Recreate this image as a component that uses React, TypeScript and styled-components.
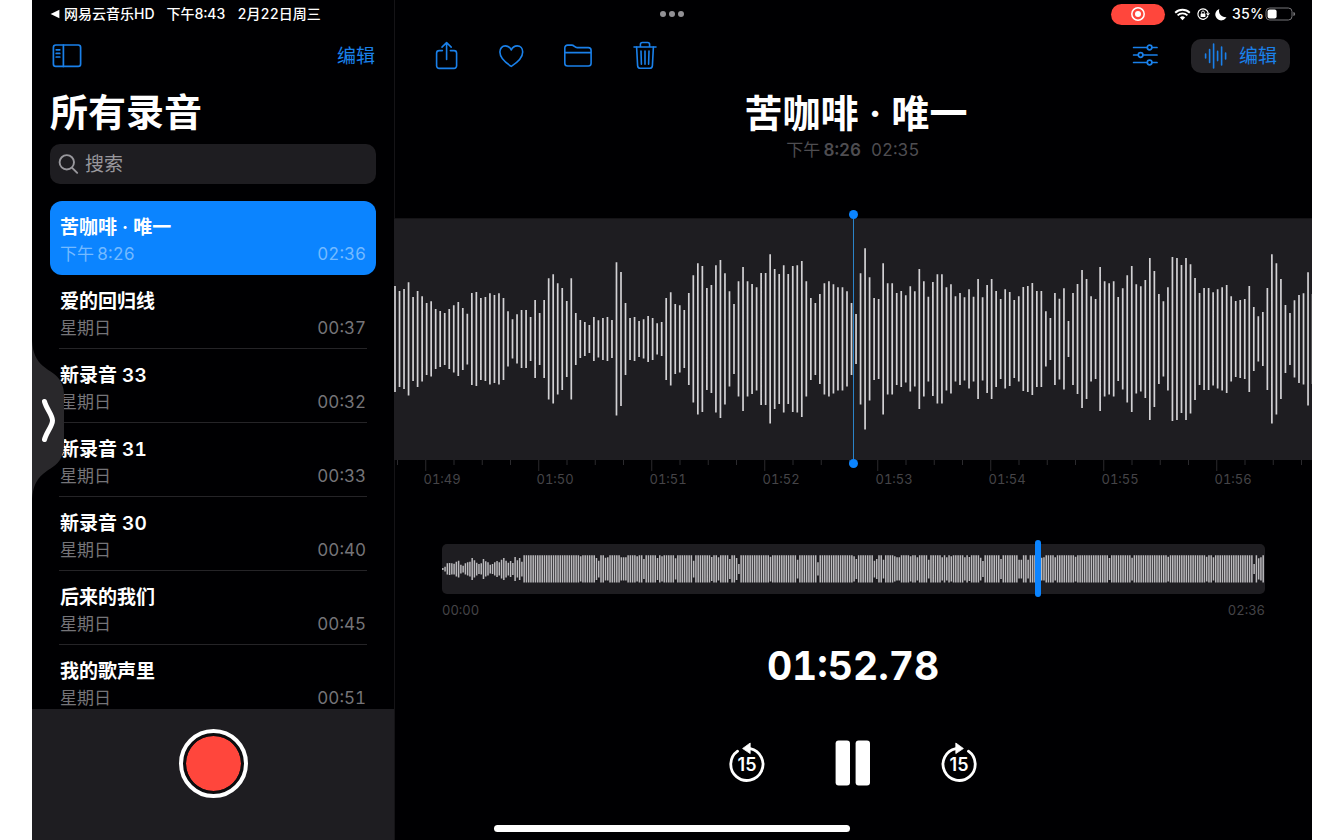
import React from "react";
import styled, { createGlobalStyle, css } from "styled-components";

const color = {
  bg: "#000002",
  panel: "#1e1d21",
  raised: "#252428",
  blue: "#0b84ff",
  icon: "#1a80ea",
  red: "#ff463c",
  muted: "#757478",
  faint: "#4e4d51",
  axis: "#454448",
  bar: "#d2d1d4",
};

const GlobalStyle = createGlobalStyle`
  *, *::before, *::after { box-sizing: border-box; }
  body {
    margin: 0;
    background: #fff;
    color: #fff;
    font-family: Inter, "Noto Sans CJK SC", sans-serif;
    font-variant-numeric: tabular-nums;
  }
  button, input { font: inherit; color: inherit; }
  h1, h2, p, ul { margin: 0; padding: 0; font-weight: inherit; }
`;

const Screen = styled.div`
  position: relative;
  display: grid;
  grid-template-columns: 362px minmax(0, 1fr);
  height: 100vh;
  min-height: 700px;
  margin: 0 32px;
  background: ${color.bg};
  overflow: hidden;
`;

const Sidebar = styled.aside`
  display: flex;
  flex-direction: column;
  min-height: 0;
  box-shadow: 1px 0 #151417;
`;

const Main = styled.main`
  display: flex;
  flex-direction: column;
  min-width: 0;
`;

const StatusBar = styled.div<{ $end?: boolean }>`
  flex: none;
  display: flex;
  align-items: center;
  justify-content: ${(p) => (p.$end ? "flex-end" : "flex-start")};
  gap: ${(p) => (p.$end ? "5px" : "12px")};
  height: 28px;
  padding: ${(p) => (p.$end ? "0 16px" : "0 18px")};
  font-size: 14px;
  font-weight: 500;
  line-height: 20px;
  white-space: nowrap;
`;

const BackLink = styled.a`
  display: flex;
  align-items: center;
  gap: 4px;
  color: inherit;
  text-decoration: none;
`;

const RecordingPill = styled.span`
  display: grid;
  place-items: center;
  width: 54px;
  height: 21px;
  margin-right: 4px;
  border-radius: 11px;
  background: ${color.red};
`;

const Dots = styled.button`
  position: absolute;
  top: 10px;
  left: 50%;
  transform: translateX(-50%);
  display: flex;
  gap: 3px;
  padding: 1px;
  border: 0;
  background: none;
  span {
    width: 6px;
    height: 6px;
    border-radius: 50%;
    background: #929195;
  }
`;

const Toolbar = styled.div<{ $main?: boolean }>`
  flex: none;
  display: flex;
  align-items: center;
  justify-content: space-between;
  height: 56px;
  padding: ${(p) => (p.$main ? "0 22px 0 38px" : "0 19px 0 18px")};
`;

const ToolGroup = styled.div<{ $gap: number }>`
  display: flex;
  align-items: center;
  gap: ${(p) => p.$gap}px;
`;

const IconButton = styled.button`
  display: grid;
  place-items: center;
  padding: 0;
  border: 0;
  background: none;
  color: ${color.icon};
  svg { display: block; }
`;

const TextButton = styled.button`
  padding: 2px 0 0;
  border: 0;
  background: none;
  color: ${color.icon};
  font-size: 19px;
  line-height: 28px;
`;

const EditButton = styled(TextButton)`
  display: flex;
  align-items: center;
  gap: 12px;
  height: 34px;
  padding: 0 13px;
  border-radius: 10px;
  background: ${color.raised};
  span { padding-top: 2px; }
`;

const LibraryTitle = styled.h1`
  padding: 0 18px;
  font-size: 38px;
  font-weight: 700;
  line-height: 56px;
`;

const SearchBox = styled.label`
  flex: none;
  display: flex;
  align-items: center;
  gap: 6px;
  height: 40px;
  margin: 4px 18px 0;
  padding: 0 8px;
  border-radius: 10px;
  background: ${color.panel};
  color: #98979c;
  input {
    flex: 1;
    min-width: 0;
    padding: 2px 0 0;
    border: 0;
    outline: 0;
    background: none;
    font-size: 19px;
    line-height: 28px;
  }
  input::placeholder { color: #98979c; opacity: 1; }
`;

const RecordingList = styled.ul`
  flex: 1;
  min-height: 0;
  margin-top: 17px;
  padding: 0 18px;
  list-style: none;
  overflow-y: auto;
  scrollbar-width: none;
`;

const RecordingRow = styled.button<{ $selected?: boolean }>`
  position: relative;
  display: grid;
  grid-template-columns: 1fr auto;
  width: 100%;
  height: 74px;
  padding: 13px 10px 9px;
  border: 0;
  border-radius: 12px;
  background: none;
  color: ${color.muted};
  font-size: 17px;
  line-height: 24px;
  text-align: left;
  strong {
    grid-column: 1 / -1;
    color: #fff;
    font-size: 19px;
    font-weight: 600;
    line-height: 28px;
  }
  ${(p) =>
    p.$selected
      ? css`
          background: ${color.blue};
          color: #74baff;
        `
      : css`
          &::after {
            content: "";
            position: absolute;
            right: 9px;
            bottom: 0;
            left: 9px;
            height: 1px;
            background: #252427;
          }
        `}
`;

const RecordPanel = styled.div`
  flex: none;
  display: flex;
  justify-content: center;
  height: 131px;
  padding-top: 20px;
  background: ${color.panel};
`;

const RecordButton = styled.button`
  width: 69px;
  height: 69px;
  padding: 3px;
  border: 4px solid #fff;
  border-radius: 50%;
  background: ${color.red} content-box;
  box-shadow: inset 0 0 0 3px #0c0c0e;
`;

const Drawer = styled.button`
  position: absolute;
  top: 50%;
  left: 0;
  transform: translateY(-50%);
  padding: 0;
  border: 0;
  background: none;
  svg { display: block; }
`;

const Heading = styled.header`
  display: flex;
  flex-direction: column;
  align-items: center;
  margin-top: 4px;
  h2 {
    padding-left: 6px;
    font-size: 38px;
    font-weight: 700;
    line-height: 50px;
  }
  p {
    display: flex;
    gap: 10px;
    color: ${color.faint};
    font-size: 17px;
    line-height: 24px;
  }
  b { font-weight: 600; }
`;

const Wave = styled.section`
  position: relative;
  flex: none;
  margin-top: 56px;
  border-top: 1px solid #151417;
`;

const WaveArea = styled.svg`
  display: block;
  width: 100%;
  height: 252px;
`;

const AxisLabels = styled.div`
  display: flex;
  justify-content: center;
  overflow: hidden;
  color: ${color.axis};
  font-size: 13px;
  line-height: 16px;
  span {
    flex: none;
    width: 113px;
  }
  span:first-child { margin-left: 45px; }
`;

const Playhead = styled.div`
  position: absolute;
  top: -5px;
  left: 50%;
  width: 1px;
  height: 250px;
  background: #2b83c8;
  &::before,
  &::after {
    content: "";
    position: absolute;
    left: -4px;
    width: 9px;
    height: 9px;
    border-radius: 50%;
    background: ${color.blue};
  }
  &::before { top: -4px; }
  &::after { bottom: -4px; }
`;

const Overview = styled.section`
  flex: none;
  margin: 57px 47px 0 48px;
`;

const Track = styled.div`
  position: relative;
  height: 50px;
  border-radius: 5px;
  background: ${color.panel};
  svg {
    display: block;
    width: 100%;
    height: 50px;
  }
`;

const Scrubber = styled.input`
  position: absolute;
  top: -4px;
  left: -3px;
  width: calc(100% + 6px);
  height: 57px;
  margin: 0;
  background: none;
  appearance: none;
  &::-webkit-slider-thumb {
    appearance: none;
    width: 6px;
    height: 57px;
    border-radius: 3px;
    background: ${color.blue};
  }
`;

const Range = styled.div`
  display: flex;
  justify-content: space-between;
  margin-top: 8px;
  color: ${color.axis};
  font-size: 13px;
  line-height: 16px;
`;

const Clock = styled.div`
  margin-top: 24px;
  font-size: 39px;
  font-weight: 700;
  line-height: 48px;
  text-align: center;
`;

const Transport = styled.div`
  display: flex;
  align-items: center;
  justify-content: center;
  gap: 68px;
  margin-top: 50px;
  button { color: #fff; }
`;

const HomeIndicator = styled.div`
  position: absolute;
  bottom: 8px;
  left: 50%;
  transform: translateX(-50%);
  width: 356px;
  height: 7px;
  border-radius: 4px;
  background: #fff;
`;

const recordings = [
  { name: "苦咖啡 · 唯一", date: "下午\u20098:26", length: "02:36" },
  { name: "爱的回归线", date: "星期日", length: "00:37" },
  { name: "新录音 33", date: "星期日", length: "00:32" },
  { name: "新录音 31", date: "星期日", length: "00:33" },
  { name: "新录音 30", date: "星期日", length: "00:40" },
  { name: "后来的我们", date: "星期日", length: "00:45" },
  { name: "我的歌声里", date: "星期日", length: "00:51" },
];

// Peak of each detail sample, as thirds of a pixel below the highest level (417).
const peaks = [
  258, 273, 267, 247, 291, 273, 289, 309, 304, 327, 333, 339, 327, 316, 306, 324, 341, 279, 276, 294,
  291, 280, 285, 280, 294, 334, 358, 343, 330, 330, 351, 300, 339, 300, 235, 223, 250, 264, 303, 235,
  339, 360, 366, 375, 351, 361, 354, 351, 360, 187, 216, 309, 354, 351, 363, 358, 348, 354, 370, 366,
  294, 277, 312, 316, 330, 279, 226, 190, 198, 264, 255, 196, 180, 220, 274, 312, 244, 201, 244, 252,
  262, 219, 219, 163, 207, 222, 196, 222, 198, 196, 183, 244, 294, 309, 282, 250, 244, 253, 262, 262,
  274, 309, 342, 220, 145, 232, 294, 297, 190, 250, 250, 279, 273, 286, 259, 274, 207, 244, 290, 246,
  223, 223, 262, 253, 289, 279, 292, 268, 290, 237, 292, 255, 237, 273, 297, 268, 276, 300, 289, 261,
  258, 249, 273, 273, 334, 354, 279, 296, 265, 363, 279, 252, 210, 237, 289, 297, 201, 244, 250, 244,
  291, 265, 226, 198, 253, 259, 240, 174, 213, 282, 304, 262, 171, 174, 195, 174, 193, 234, 279, 264,
  264, 277, 268, 262, 255, 289, 303, 300, 297, 258, 321, 349, 336, 264, 163, 190, 237, 315, 339, 301,
  285, 280, 217, 282,
];

// Quiet opening of the recording, then the samples that fall below full level.
const intro = [
  3, 7, 17, 18, 17, 16, 22, 25, 13, 10, 17, 20, 22, 33, 26, 19, 15, 17, 30, 23, 20, 13, 15, 20, 24, 20,
  28, 33, 25, 19, 24, 18, 36, 26, 33, 22,
];
const dips: Record<number, number> = {
  61: 38, 68: 33, 69: 25, 72: 34, 73: 35, 79: 35, 80: 35, 81: 35, 86: 38, 89: 30, 95: 33, 97: 38,
  103: 32, 111: 25, 119: 36, 122: 35, 127: 30, 130: 33, 131: 15, 145: 37, 157: 28, 166: 20, 182: 38,
  183: 30, 191: 25, 192: 30, 195: 28, 200: 38, 201: 35, 202: 35, 207: 38, 210: 35, 215: 28, 221: 35,
  223: 35, 225: 38, 231: 35, 233: 36, 238: 34, 239: 24, 247: 30, 255: 28, 256: 28, 259: 28, 265: 34,
  266: 35, 271: 35, 280: 37, 295: 33, 305: 34, 321: 37, 338: 37, 341: 35, 359: 15, 361: 32, 362: 35,
};
const SAMPLES = 364;

const wavePath = peaks
  .map((v, i) => {
    const half = (417 - v) / 3;
    return `M${(1 + i * 4.52).toFixed(2)} ${(120 - half).toFixed(1)}v${(half * 2).toFixed(1)}`;
  })
  .join("");

const overviewPath = Array.from({ length: SAMPLES }, (_, i) => {
  const half = (intro[i] ?? dips[i] ?? 41) / 3;
  return `M${(0.8 + i * 2.26).toFixed(2)} ${(25 - half).toFixed(1)}v${(half * 2).toFixed(1)}`;
}).join("");

const ticks = Array.from({ length: 33 }, (_, i) => ({ x: 3.5 + i * 28.25, major: i % 4 === 1 }));

const stroke = { fill: "none", stroke: "currentColor", strokeLinecap: "round", strokeLinejoin: "round" } as const;

const SidebarIcon = () => (
  <svg width="32" height="28" viewBox="0 0 32 28" {...stroke} strokeWidth="1.7">
    <rect x="3.4" y="3" width="27.2" height="21.4" rx="2.4" />
    <path d="M13.4 3v21.4M6.2 7.8h3.6M6.2 11.4h3.6M6.2 15h3.6" />
  </svg>
);

const SearchIcon = () => (
  <svg width="21" height="22" viewBox="0 0 21 22" {...stroke} strokeWidth="1.9">
    <circle cx="8.8" cy="9.3" r="7.2" />
    <path d="m14.2 14.8 5 5" />
  </svg>
);

const ShareIcon = () => (
  <svg width="28" height="32" viewBox="0 1 28 32" {...stroke} strokeWidth="1.6">
    <path d="M10.4 11.6H7.2a2.6 2.6 0 0 0-2.6 2.6v12.6a2.600 2.600 0 0 0 2.600 2.600h14.800a2.600 2.600 0 0 0 2.600-2.600V14.200a2.600 2.600 0 0 0-2.600-2.600h-3.600" />
    <path d="M14.600 20.400V4M10 8.100l4.600-4.500 4.600 4.500" />
  </svg>
);

const HeartIcon = () => (
  <svg width="28" height="28" viewBox="0 0 28 28" {...stroke} strokeWidth="1.6">
    <path d="M14.3 24.4C8.4 20.7 2.9 15.7 2.9 10.1c0-3.600 2.300-6.200 5.500-6.200 2.700 0 4.800 1.500 5.900 4.100 1.100-2.600 3.200-4.100 5.900-4.100 3.200 0 5.500 2.600 5.500 6.200 0 5.600-5.500 10.600-11.400 14.300Z" />
  </svg>
);

const FolderIcon = () => (
  <svg width="32" height="28" viewBox="0 0 32 28" {...stroke} strokeWidth="1.6">
    <path d="M2.800 9.800V5.900a2.800 2.800 0 0 1 2.800-2.800h4.100c1.400 0 1.900.5 2.800 1.300.8.8 1.400 1.200 2.700 1.200h11.100a2.800 2.800 0 0 1 2.800 2.800v12.800a2.800 2.800 0 0 1-2.800 2.800H5.600a2.800 2.800 0 0 1-2.800-2.800ZM2.800 10.600h26.300" />
  </svg>
);

const TrashIcon = () => (
  <svg width="28" height="32" viewBox="0 1 28 32" {...stroke} strokeWidth="1.6">
    <path d="M3 8h22M9.400 7.800V5.500c0-1.300.8-2 2-2h5.200c1.200 0 2 .7 2 2v2.300" />
    <path d="m5.600 8 1 18.600c.1 1.700 1.100 2.700 2.700 2.700h9.400c1.600 0 2.600-1 2.700-2.700l1-18.600M10 12l.4 13.200M14 12v13.200M18 12l-.4 13.200" />
  </svg>
);

const SlidersIcon = () => (
  <svg width="26" height="24" viewBox="0 1 26 24" {...stroke} strokeWidth="1.7">
    <path d="M1.600 4.500h13.600M20 4.500h5M1.600 12h4.600M11 12h14M1.600 19.500h13.600M20 19.500h5" />
    <circle cx="17.600" cy="4.500" r="2.300" />
    <circle cx="8.600" cy="12" r="2.300" />
    <circle cx="17.600" cy="19.500" r="2.300" />
  </svg>
);

const WaveformIcon = () => (
  <svg width="23" height="28" viewBox="0 0 23 28" {...stroke} strokeWidth="1.6">
    <path d="M1.600 12v4M5.600 7.600v12.800M9.600 2v24M13.600 9.400v9.200M17.600 5v18M21.600 11v6" />
  </svg>
);

const RecordingDot = () => (
  <svg width="16" height="16" viewBox="0 0 16 16">
    <circle cx="8" cy="8" r="6.2" fill="none" stroke="#fff" strokeWidth="1.5" />
    <circle cx="8" cy="8" r="3" fill="#fff" />
  </svg>
);

const WifiIcon = () => (
  <svg width="17" height="13" viewBox="0 0 17 13" fill="#fff">
    <path d="M8.5 12.3 5.9 9.5a3.800 3.800 0 0 1 5.200 0Z" />
    <path d="M1.200 4.700a10.500 10.500 0 0 1 14.600 0M3.600 7.400a7 7 0 0 1 9.800 0" fill="none" stroke="#fff" strokeWidth="1.9" />
  </svg>
);

const RotationLockIcon = () => (
  <svg width="14" height="14" viewBox="0 0 14 14">
    <path d="M11.9 9.1a5.2 5.2 0 1 1 .3-3" fill="none" stroke="#fff" strokeWidth="1.2" />
    <path d="m10 6.2 4 .1-2.1 2.6Z" fill="#fff" />
    <rect x="4.6" y="6.4" width="4.8" height="3.6" rx=".6" fill="#fff" />
    <path d="M5.6 6.6V5.4a1.400 1.400 0 0 1 2.800 0v1.200" fill="none" stroke="#fff" strokeWidth=".9" />
  </svg>
);

const MoonIcon = () => (
  <svg width="12" height="13" viewBox="0 0 12 13" fill="#fff">
    <path d="M4.3.9a6.400 6.400 0 0 0 7.200 8.200A5.900 5.900 0 1 1 4.300.9Z" />
  </svg>
);

const BatteryIcon = () => (
  <svg width="31" height="14" viewBox="0 0 31 14">
    <rect x="1" y="1" width="26" height="12" rx="3.6" fill="none" stroke="#77767a" />
    <rect x="2.6" y="2.6" width="9" height="8.8" rx="2" fill="#fff" />
    <path d="M28.4 5v4c1.200-.4 1.700-1.100 1.700-2s-.5-1.600-1.700-2Z" fill="#77767a" />
  </svg>
);

const SkipIcon = ({ forward }: { forward?: boolean }) => (
  <svg width="40" height="44" viewBox="0 0 40 44" fill="none">
    <g transform={forward ? "matrix(-1 0 0 1 40 0)" : undefined}>
      <path d="M10.600 10.200a16.100 16.100 0 1 0 12.600-2.600" stroke="#fff" strokeWidth="2.800" strokeLinecap="round" />
      <path d="M15.600 7.500 23.200 2v10.600Z" fill="#fff" stroke="#fff" strokeWidth=".8" strokeLinejoin="round" />
    </g>
    <text x="20" y="30" textAnchor="middle" fill="#fff" fontSize="18" fontWeight="600" style={{ fontVariantNumeric: "normal" }}>
      15
    </text>
  </svg>
);

const PauseIcon = () => (
  <svg width="36" height="46" viewBox="0 0 36 46" fill="#fff">
    <rect x=".6" y=".6" width="14.4" height="45" rx="3" />
    <rect x="20.6" y=".6" width="14.4" height="45" rx="3" />
  </svg>
);

export default function App() {
  return (
    <>
      <GlobalStyle />
      <Screen>
        <Sidebar>
          <StatusBar>
            <BackLink href="#">
              <svg width="10" height="10" viewBox="0 0 10 10" fill="#fff">
                <path d="M.6 5 9.4.8v8.400Z" />
              </svg>
              网易云音乐HD
            </BackLink>
            <span>下午8:43</span>
            <span>2月22日周三</span>
          </StatusBar>
          <Toolbar>
            <IconButton aria-label="边栏">
              <SidebarIcon />
            </IconButton>
            <TextButton>编辑</TextButton>
          </Toolbar>
          <LibraryTitle>所有录音</LibraryTitle>
          <SearchBox>
            <SearchIcon />
            <input type="search" placeholder="搜索" aria-label="搜索" />
          </SearchBox>
          <RecordingList>
            {recordings.map((r, i) => (
              <li key={r.name}>
                <RecordingRow $selected={i === 0}>
                  <strong>{r.name}</strong>
                  <span>{r.date}</span>
                  <span>{r.length}</span>
                </RecordingRow>
              </li>
            ))}
          </RecordingList>
          <RecordPanel>
            <RecordButton aria-label="录音" />
          </RecordPanel>
        </Sidebar>

        <Main>
          <StatusBar $end>
            <RecordingPill>
              <RecordingDot />
            </RecordingPill>
            <WifiIcon />
            <RotationLockIcon />
            <MoonIcon />
            <ToolGroup $gap={1}>
              <span>35%</span>
              <BatteryIcon />
            </ToolGroup>
          </StatusBar>
          <Toolbar $main>
            <ToolGroup $gap={37}>
              <IconButton aria-label="共享"><ShareIcon /></IconButton>
              <IconButton aria-label="喜欢"><HeartIcon /></IconButton>
              <IconButton aria-label="文件夹"><FolderIcon /></IconButton>
              <IconButton aria-label="删除"><TrashIcon /></IconButton>
            </ToolGroup>
            <ToolGroup $gap={33}>
              <IconButton aria-label="选项"><SlidersIcon /></IconButton>
              <EditButton>
                <WaveformIcon />
                <span>编辑</span>
              </EditButton>
            </ToolGroup>
          </Toolbar>

          <Heading>
            <h2>苦咖啡 · 唯一</h2>
            <p>
              <span>下午{"\u2009"}<b>8:26</b></span>
              <span>02:35</span>
            </p>
          </Heading>

          <Wave aria-label="波形">
            <WaveArea viewBox="0 0 918 252" preserveAspectRatio="xMidYMid slice">
              <rect width="918" height="241" fill={color.panel} />
              <path d={wavePath} stroke={color.bar} strokeWidth="1.7" fill="none" />
              {ticks.map((t) => (
                <path key={t.x} d={`M${t.x} 241v${t.major ? 11 : 5}`} stroke="#2b2a2e" />
              ))}
            </WaveArea>
            <AxisLabels>
              {["01:49", "01:50", "01:51", "01:52", "01:53", "01:54", "01:55", "01:56"].map((t) => (
                <span key={t}>{t}</span>
              ))}
            </AxisLabels>
            <Playhead />
          </Wave>

          <Overview>
            <Track>
              <svg viewBox="0 0 823 50" preserveAspectRatio="none">
                <path d={overviewPath} stroke="#bcbbbe" strokeWidth="1.5" fill="none" />
              </svg>
              <Scrubber type="range" min="0" max="15600" defaultValue="11300" aria-label="播放位置" />
            </Track>
            <Range>
              <span>00:00</span>
              <span>02:36</span>
            </Range>
          </Overview>

          <Clock>01:52.78</Clock>

          <Transport>
            <IconButton aria-label="后退15秒"><SkipIcon /></IconButton>
            <IconButton aria-label="暂停"><PauseIcon /></IconButton>
            <IconButton aria-label="前进15秒"><SkipIcon forward /></IconButton>
          </Transport>
        </Main>

        <Dots aria-label="多任务">
          <span />
          <span />
          <span />
        </Dots>
        <Drawer aria-label="展开">
          <svg width="32" height="158" viewBox="0 0 32 158">
            <path d="M0 0C1 12 4 19 11 25C18 31 25 33 29 41C32 47 32 51 32 57V101C32 107 32 111 29 117C25 125 18 127 11 133C4 139 1 146 0 158Z" fill="#29282b" />
            <path d="M12.5 60.5C14.500 68 20.500 74 20.500 79.500S14.500 91 12.500 98.500" fill="none" stroke="#fff" strokeWidth="5" strokeLinecap="round" />
          </svg>
        </Drawer>
        <HomeIndicator />
      </Screen>
    </>
  );
}
